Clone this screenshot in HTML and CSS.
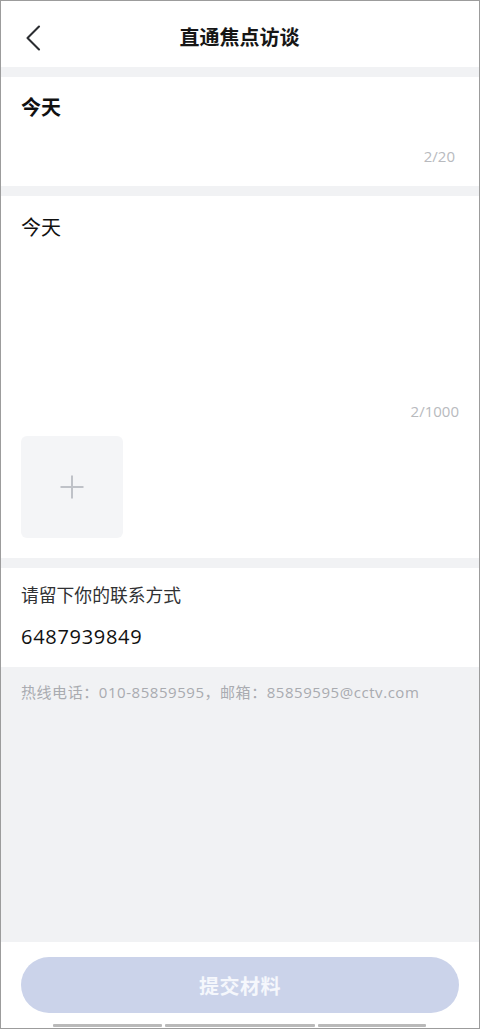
FILE: index.html
```html
<!DOCTYPE html>
<html lang="zh-CN">
<head>
<meta charset="utf-8">
<title>直通焦点访谈</title>
<link rel="stylesheet" href="styles.css">
</head>
<body>
<div class="screen">
  <header class="header">
    <div class="back">
      <svg width="16" height="26" viewBox="0 0 16 26"><polyline points="13,1.5 1.5,13 13,24.5" fill="none" stroke="#2b2d31" stroke-width="2.1" stroke-linecap="round" stroke-linejoin="round"/></svg>
    </div>
    <div class="title">直通焦点访谈</div>
    <div></div>
  </header>
  <div class="gap"></div>
  <section class="card title-card">
    <div class="title-input">今天</div>
    <div class="counter">2/20</div>
  </section>
  <div class="gap"></div>
  <section class="card body-card">
    <div class="body-input">今天</div>
    <div class="counter counter-body">2/1000</div>
    <div class="upload">
      <svg width="26" height="26" viewBox="0 0 26 26"><path d="M13 1.5V24.5M1.5 13H24.5" stroke="#bfc2c8" stroke-width="2"/></svg>
    </div>
  </section>
  <div class="gap"></div>
  <section class="card contact-card">
    <div class="contact-label">请留下你的联系方式</div>
    <div class="contact-value">6487939849</div>
  </section>
  <div class="info">
    <div class="hotline">热线电话：010-85859595，邮箱：85859595@cctv.com</div>
  </div>
  <footer class="footer">
    <button class="submit">提交材料</button>
    <div class="bars">
      <span class="bar b1"></span>
      <span class="bar b2"></span>
      <span class="bar b3"></span>
    </div>
  </footer>
</div>
</body>
</html>
```
FILE: styles.css
```css
* { box-sizing: border-box; margin: 0; padding: 0; }
html, body { width: 480px; height: 1029px; overflow: hidden; background: #fff; }
body { font-family: "Open Sans", "Noto Sans CJK SC", sans-serif; color: #111; }
.screen {
  width: 480px; height: 1029px;
  border: 1px solid #9c9c9c;
  display: flex; flex-direction: column;
  background: #fff;
}
.header {
  height: 66px; flex: none;
  padding-top: 6px;
  display: grid; grid-template-columns: 1fr auto 1fr;
  align-items: center;
}
.back { padding-left: 25px; display: flex; align-items: center; height: 26px; margin-top: 2px; }
.title { font-family: "Noto Sans CJK SC", sans-serif; font-size: 20px; font-weight: 700; line-height: 28px; color: #161616; margin-left: -1px; }
.gap { height: 10px; flex: none; background: #f1f2f4; }
.card { background: #fff; flex: none; }
.title-card { height: 109px; padding: 16px 24px 0 20px; }
.title-input { font-family: "Noto Sans CJK SC", sans-serif; font-size: 20px; font-weight: 700; line-height: 28px; }
.counter { text-align: right; font-size: 15px; line-height: 20px; color: #b8babe; }
.title-card .counter { margin-top: 25px; }
.body-card { height: 362px; padding: 17px 20px 0 20px; }
.body-input { font-family: "Noto Sans CJK SC", sans-serif; font-size: 20px; line-height: 28px; height: 188px; }
.counter-body { margin-top: 0; }
.upload {
  width: 102px; height: 102px; margin-top: 15px;
  background: #f4f5f7; border-radius: 6px;
  display: flex; align-items: center; justify-content: center;
}
.contact-card { height: 99px; padding: 14px 20px 0 20px; }
.contact-label { font-family: "Noto Sans CJK SC", sans-serif; font-size: 17.8px; line-height: 24px; color: #303133; }
.contact-value { font-size: 20px; line-height: 28px; margin-top: 17px; color: #111; letter-spacing: 0.7px; }
.info { flex: 1; background: #f1f2f4; padding: 15px 20px 0 20px; }
.hotline { font-size: 15px; line-height: 20px; color: #a9abb0; white-space: nowrap; letter-spacing: 0.55px; }
.footer { height: 86px; flex: none; background: #fff; padding: 15px 20px 0 20px; }
.submit {
  display: block; width: 438px; height: 56px; border: none; border-radius: 28px;
  background: #cbd3ea; color: #f5f7fc;
  font-family: "Noto Sans CJK SC", sans-serif; font-size: 20px; font-weight: 700; letter-spacing: 0.5px;
}
.bars { display: flex; gap: 3px; margin-top: 11px; margin-left: 32px; }
.bar { display: block; height: 3px; background: #b9b9b9; border-radius: 1px; }
.b1 { width: 109px; }
.b2 { width: 150px; }
.b3 { width: 108px; }
```
